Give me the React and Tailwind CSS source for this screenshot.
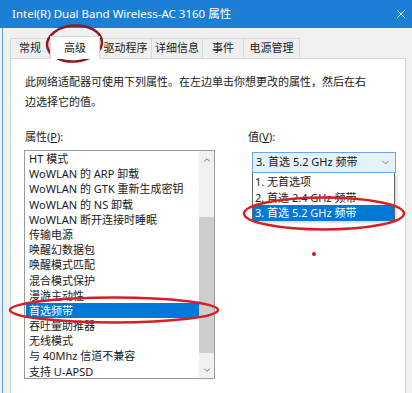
import { ChevronDown, ChevronUp, X } from 'lucide-react';

const font = { fontFamily: '"Noto Sans", "Noto Sans CJK SC", sans-serif' };

const tabs = [
  { label: '常规', w: 'w-[40px]' },
  { label: '高级', w: 'w-[50px]', active: true },
  { label: '驱动程序', w: 'w-[53px]' },
  { label: '详细信息', w: 'w-[52px]' },
  { label: '事件', w: 'w-[42px]' },
  { label: '电源管理', w: 'w-[57px]' },
];

const props = [
  'HT 模式',
  'WoWLAN 的 ARP 卸载',
  'WoWLAN 的 GTK 重新生成密钥',
  'WoWLAN 的 NS 卸载',
  'WoWLAN 断开连接时睡眠',
  '传输电源',
  '唤醒幻数据包',
  '唤醒模式匹配',
  '混合模式保护',
  '漫游主动性',
  '首选频带',
  '吞吐量助推器',
  '无线模式',
  '与 40Mhz 信道不兼容',
  '支持 U-APSD',
];

const values = ['1. 无首选项', '2. 首选 2.4 GHz 频带', '3. 首选 5.2 GHz 频带'];

export default function App() {
  return (
    <div className="relative w-[412px] h-[393px] overflow-hidden bg-[#f0f0f0] text-[#1a1a1a]" style={font}>
      {/* title bar */}
      <div className="h-[28px] bg-[#1b7fd6] flex items-center pl-[12px] pr-[4px] text-white text-[11.5px]">
        <span>Intel(R) Dual Band Wireless-AC 3160 属性</span>
        <X className="ml-auto w-[14px] h-[14px]" strokeWidth={1.5} />
      </div>

      <div className="ml-[2px] border-l border-[#5a9ee0] h-full pl-[7px] pr-[6px] pt-[10px]">
        {/* tabs */}
        <div className="flex items-end h-[20px] text-[11px]">
          {tabs.map((t) =>
            t.active ? (
              <div key={t.label} className={`${t.w} h-[23px] -mb-px bg-white border border-b-0 border-[#d9d9d9] flex items-center justify-center relative z-10`}>
                {t.label}
              </div>
            ) : (
              <div key={t.label} className={`${t.w} h-[20px] -ml-px first:ml-0 bg-[#f0f0f0] border border-b-0 border-[#d9d9d9] flex items-center justify-center`}>
                {t.label}
              </div>
            )
          )}
        </div>

        {/* panel */}
        <div className="bg-white border border-[#d9d9d9] h-[400px] pl-[13px] pt-[13px] text-[11px]">
          <p className="leading-[20px] pl-px">
            此网络适配器可使用下列属性。在左边单击你想更改的属性，然后在右
            <br />
            边选择它的值。
          </p>

          <div className="flex mt-[15px]">
            {/* left column */}
            <div className="w-[191px]">
              <div className="leading-[20px] pl-px">属性(<span className="underline">P</span>):</div>
              <div className="mt-[3px] h-[229px] border border-[#9a9a9a] flex overflow-hidden">
                <div className="flex-1 pl-px">
                  {props.map((p) => (
                    <div
                      key={p}
                      className={`h-[15.2px] leading-[15.2px] pl-[3px] whitespace-nowrap ${p === '首选频带' ? 'bg-[#0078d7] text-white' : ''}`}
                    >
                      {p}
                    </div>
                  ))}
                </div>
                <div className="w-[15px] bg-[#f0f0f0] flex flex-col items-center">
                  <div className="h-[17px] flex items-center justify-center">
                    <ChevronUp className="w-[10px] h-[10px] text-[#606060]" strokeWidth={2} />
                  </div>
                  <div className="h-[49px]" />
                  <div className="w-full h-[136px] bg-[#cdcdcd]" />
                  <div className="flex-1" />
                  <div className="h-[17px] flex items-center justify-center">
                    <ChevronDown className="w-[10px] h-[10px] text-[#606060]" strokeWidth={2} />
                  </div>
                </div>
              </div>
            </div>

            {/* right column */}
            <div className="ml-[33px] w-[148px]">
              <div className="leading-[20px]">值(<span className="underline">V</span>):</div>
              <div className="ml-[4px] mt-[5px] h-[21px] bg-[#e5f1fb] border border-[#6aa7e6] flex items-center pl-[3px] pr-[4px]">
                <span>3. 首选 5.2 GHz 频带</span>
                <ChevronDown className="ml-auto w-[11px] h-[11px] text-[#555]" strokeWidth={1.5} />
              </div>
              <div className="ml-[4px] w-[143px] h-[48px] bg-white border border-[#646464] border-t-0 shadow-[2px_2px_2px_rgba(0,0,0,0.15)] pt-px">
                {values.map((v, i) => (
                  <div
                    key={v}
                    className={`h-[15.5px] leading-[15.5px] pl-[2px] whitespace-nowrap ${i === 2 ? 'bg-[#0078d7] text-white' : ''}`}
                  >
                    {v}
                  </div>
                ))}
              </div>
            </div>
          </div>
        </div>
      </div>

      {/* annotations */}
      <svg className="absolute inset-0 pointer-events-none" width="412" height="393">
        <ellipse cx="74.5" cy="43.5" rx="27.5" ry="18" fill="none" stroke="#8a1c24" strokeWidth="2.5" transform="rotate(-4 74.5 43.5)" />
        <ellipse cx="114" cy="310" rx="104" ry="12.5" fill="none" stroke="#d42024" strokeWidth="2.5" />
        <ellipse cx="324" cy="213.5" rx="80" ry="16" fill="none" stroke="#d42024" strokeWidth="2.5" />
        <circle cx="314" cy="254" r="2" fill="#c0202a" />
      </svg>
    </div>
  );
}
